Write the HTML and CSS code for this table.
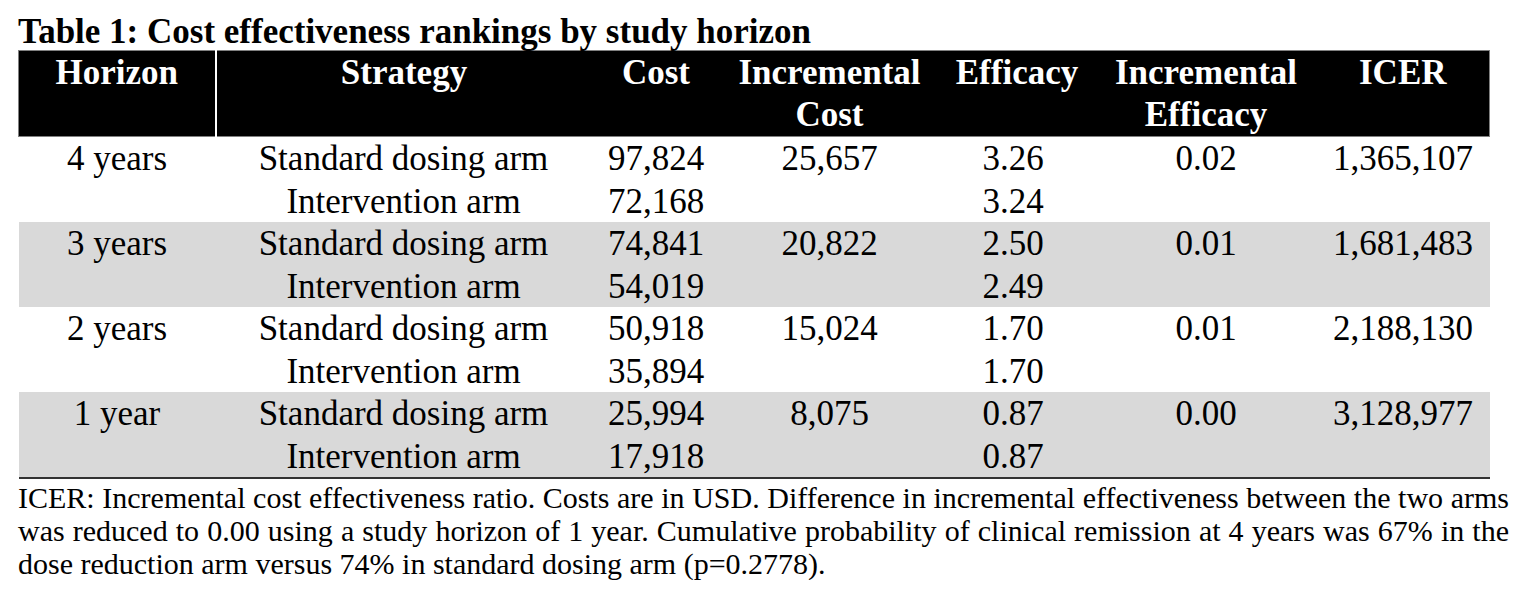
FILE: index.html
```html
<!DOCTYPE html>
<html lang="en">
<head>
<meta charset="utf-8">
<title>Table 1</title>
<link rel="stylesheet" href="styles.css">
</head>
<body>
<div class="page">
  <div class="title">Table 1: Cost effectiveness rankings by study horizon</div>
  <table class="ce-table">
    <colgroup>
      <col class="c-horizon">
      <col class="c-strategy">
      <col class="c-cost">
      <col class="c-inccost">
      <col class="c-eff">
      <col class="c-inceff">
      <col class="c-icer">
    </colgroup>
    <thead>
      <tr>
        <th class="h-horizon">Horizon</th>
        <th>Strategy</th>
        <th>Cost</th>
        <th>Incremental Cost</th>
        <th>Efficacy</th>
        <th>Incremental Efficacy</th>
        <th>ICER</th>
      </tr>
    </thead>
    <tbody class="grp">
      <tr><td>4 years</td><td>Standard dosing arm</td><td>97,824</td><td>25,657</td><td class="eff">3.26</td><td>0.02</td><td>1,365,107</td></tr>
      <tr><td></td><td>Intervention arm</td><td>72,168</td><td></td><td class="eff">3.24</td><td></td><td></td></tr>
    </tbody>
    <tbody class="grp shade">
      <tr><td>3 years</td><td>Standard dosing arm</td><td>74,841</td><td>20,822</td><td class="eff">2.50</td><td>0.01</td><td>1,681,483</td></tr>
      <tr><td></td><td>Intervention arm</td><td>54,019</td><td></td><td class="eff">2.49</td><td></td><td></td></tr>
    </tbody>
    <tbody class="grp">
      <tr><td>2 years</td><td>Standard dosing arm</td><td>50,918</td><td>15,024</td><td class="eff">1.70</td><td>0.01</td><td>2,188,130</td></tr>
      <tr><td></td><td>Intervention arm</td><td>35,894</td><td></td><td class="eff">1.70</td><td></td><td></td></tr>
    </tbody>
    <tbody class="grp shade last">
      <tr><td>1 year</td><td>Standard dosing arm</td><td>25,994</td><td>8,075</td><td class="eff">0.87</td><td>0.00</td><td>3,128,977</td></tr>
      <tr><td></td><td>Intervention arm</td><td>17,918</td><td></td><td class="eff">0.87</td><td></td><td></td></tr>
    </tbody>
  </table>
  <div class="note">
    <div class="note-line">ICER: Incremental cost effectiveness ratio. Costs are in USD. Difference in incremental effectiveness between the two arms</div>
    <div class="note-line">was reduced to 0.00 using a study horizon of 1 year. Cumulative probability of clinical remission at 4 years was 67% in the</div>
    <div class="note-line note-last">dose reduction arm versus 74% in standard dosing arm (p=0.2778).</div>
  </div>
</div>
</body>
</html>
```

FILE: styles.css
```css
html, body {
  margin: 0;
  padding: 0;
  background: #ffffff;
}

body {
  font-family: "Liberation Serif", "Times New Roman", serif;
  color: #000000;
}

.page {
  padding-left: 18px;
  width: 1491px;
}

.title {
  font-weight: bold;
  font-size: 35px;
  line-height: 35px;
  padding-top: 14px;
  height: 35px;
  margin-bottom: 1px;
  white-space: nowrap;
}

.ce-table {
  border-collapse: collapse;
  table-layout: fixed;
  width: 1471px;
  font-size: 35px;
}

.c-horizon { width: 197px; }
.c-strategy { width: 376px; }
.c-cost { width: 129px; }
.c-inccost { width: 218px; }
.c-eff { width: 157px; }
.c-inceff { width: 221px; }
.c-icer { width: 173px; }

.ce-table th {
  background: #000000;
  color: #ffffff;
  font-weight: bold;
  text-align: center;
  vertical-align: top;
  line-height: 42px;
  height: 85px;
  box-sizing: border-box;
  padding: 1px 0 0 0;
  border-top: 1px solid #808080;
  border-bottom: 1px solid #808080;
}

.ce-table th:first-child {
  border-left: 1px solid #808080;
}

.ce-table th:last-child {
  border-right: 1px solid #808080;
}

.ce-table th.h-horizon {
  border-right: 2px solid #ffffff;
}

.ce-table td {
  text-align: center;
  vertical-align: top;
  height: 42.5px;
  box-sizing: border-box;
  padding: 2px 0 0 0;
  line-height: 40.5px;
  white-space: nowrap;
}

.ce-table td.eff {
  padding-right: 8px;
}

.shade td {
  background: #d9d9d9;
}

.last tr:last-child td {
  border-bottom: 2px solid #333333;
}

.note {
  margin-top: 2px;
  font-size: 30px;
  line-height: 33px;
}

.note-line {
  text-align: justify;
  text-align-last: justify;
  white-space: nowrap;
}

.note-line.note-last {
  text-align: left;
  text-align-last: left;
}
```
